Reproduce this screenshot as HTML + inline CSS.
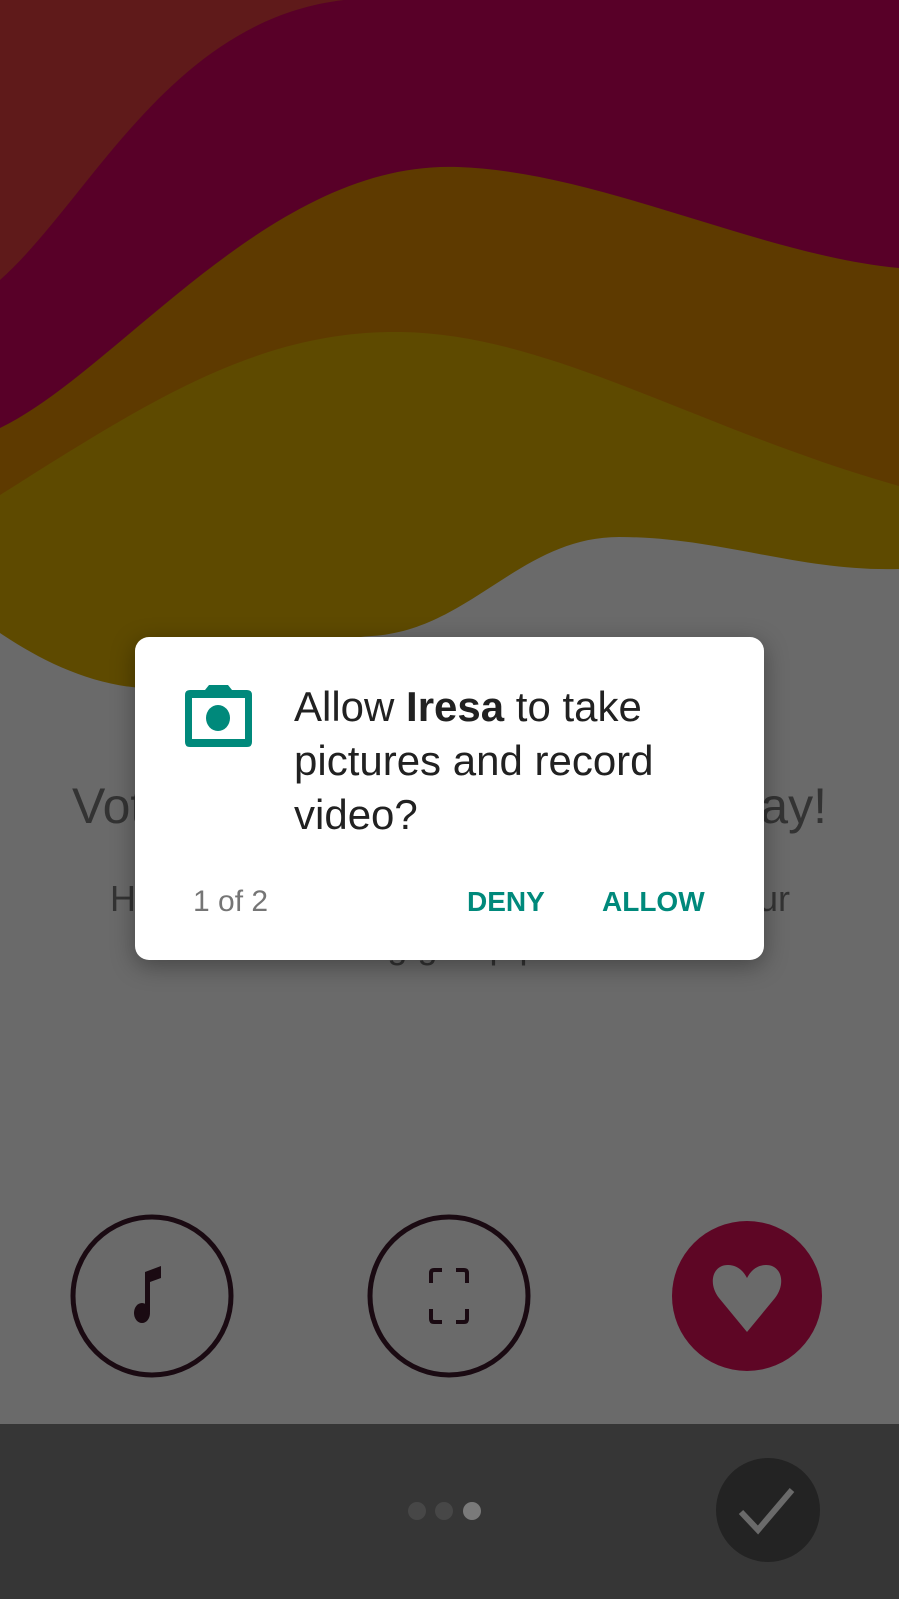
<!DOCTYPE html>
<html><head><meta charset="utf-8"><style>
html,body{margin:0;padding:0;width:899px;height:1599px;overflow:hidden;background:#6a6a6a;font-family:"Liberation Sans",sans-serif}
.abs{position:absolute;line-height:1}
</style></head><body>
<svg class="abs" style="left:0;top:0" width="899" height="1599" viewBox="0 0 899 1599">
<rect width="899" height="1599" fill="#6a6a6a"/>
<rect width="899" height="700" fill="#5f1a1a"/>
<path d="M0,280 C90,200 170,20 344,0 L899,0 L899,700 L0,700 Z" fill="#580028"/>
<path d="M0,428 C120,370 270,160 458,167 C600,172 760,255 899,268 L899,700 L0,700 Z" fill="#5e3a00"/>
<path d="M0,495 C150,400 260,330 401,332 C550,334 700,430 899,486 L899,700 L0,700 Z" fill="#5e4a00"/>
<path d="M0,633 C40,660 90,685 143,688 C220,690 300,640 372,636 C470,630 520,537 619,537 C720,537 800,572 899,569 L899,700 L0,700 Z" fill="#6a6a6a"/>
<rect y="1424" width="899" height="175" fill="#363636"/>
<circle cx="152" cy="1296" r="79" fill="none" stroke="#1a0a12" stroke-width="5"/>
<path d="M145,1310 L145,1272 L161,1266 L161,1278 L150,1282 L150,1312 Z" fill="#1a0a12"/>
<ellipse cx="142" cy="1313" rx="8" ry="10" fill="#1a0a12"/>
<circle cx="449" cy="1296" r="79" fill="none" stroke="#1a0a12" stroke-width="5"/>
<path d="M431,1283 V1273 Q431,1270 434,1270 H442 M456,1270 H464 Q467,1270 467,1273 V1283 M467,1309 V1319 Q467,1322 464,1322 H456 M442,1322 H434 Q431,1322 431,1319 V1309" fill="none" stroke="#1a0a12" stroke-width="4"/>
<circle cx="747" cy="1296" r="75" fill="#5e0625"/>
<path d="M747,1332 L719,1298 C708,1284 712,1265 728,1265 C738,1265 744,1272 747,1278 C750,1272 756,1265 766,1265 C782,1265 786,1284 775,1298 Z" fill="#6a6a6a"/>
<circle cx="417" cy="1511" r="9" fill="#474747"/>
<circle cx="444" cy="1511" r="9" fill="#474747"/>
<circle cx="472" cy="1511" r="9" fill="#7a7a7a"/>
<circle cx="768" cy="1510" r="52" fill="#232323"/>
<path d="M741,1512 L758,1530 L792,1490" fill="none" stroke="#6a6a6a" stroke-width="6"/>
</svg>
<div class="abs" style="left:72px;top:781px;width:755px;text-align:justify;text-align-last:justify;font-size:50px;color:#333">Vote for your favourite today!</div>
<div class="abs" style="left:110px;top:881px;width:680px;text-align:justify;text-align-last:justify;font-size:36px;color:#333">Help us choose the best of your</div>
<div class="abs" style="left:0;top:928px;width:899px;text-align:center;font-size:36px;color:#333">amazing group photos</div>
<div class="abs" style="left:135px;top:637px;width:629px;height:323px;background:#fff;border-radius:14px;box-shadow:0 6px 24px rgba(0,0,0,.35)">
<svg class="abs" style="left:50px;top:48px" width="67" height="62" viewBox="0 0 67 62">
<path d="M20,5 L24,0 H43 L47,5 H62 Q67,5 67,10 V57 Q67,62 62,62 H5 Q0,62 0,57 V10 Q0,5 5,5 Z M7,13 V54 H60 V13 Z" fill="#00897b"/>
<ellipse cx="33" cy="33" rx="12" ry="13" fill="#00897b"/>
</svg>
<div class="abs" style="left:159px;top:43px;width:440px;font-size:42px;line-height:54px;color:#212121">Allow <b>Iresa</b> to take pictures and record video?</div>
<div class="abs" style="left:58px;top:250px;font-size:30px;color:#757575">1 of 2</div>
<div class="abs" style="left:332px;top:251px;font-size:28px;font-weight:bold;color:#00897b">DENY</div>
<div class="abs" style="left:467px;top:251px;font-size:28px;font-weight:bold;color:#00897b">ALLOW</div>
</div>
</body></html>
